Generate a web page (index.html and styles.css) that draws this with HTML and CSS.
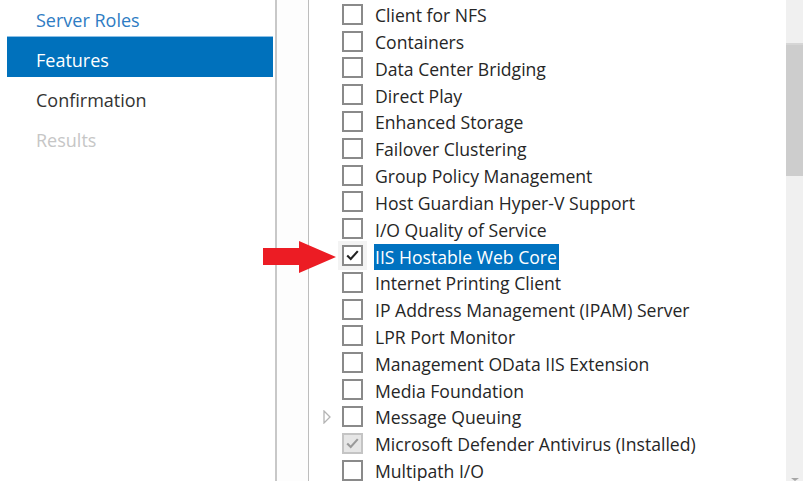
FILE: index.html
```html
<!DOCTYPE html>
<html>
<head>
<meta charset="utf-8">
<link rel="stylesheet" href="styles.css">
</head>
<body>
<div class="wizard">
  <nav class="nav">
    <div class="nav-item visited">Server Roles</div>
    <div class="nav-item active">Features</div>
    <div class="nav-item">Confirmation</div>
    <div class="nav-item disabled">Results</div>
  </nav>
  <div class="sep"></div>
  <div class="gutter"></div>
  <div class="sep thin"></div>
  <div class="pane">
    <div class="list">
      <div class="row"><span class="exp"></span><span class="box"></span><span class="label">Client for NFS</span></div>
      <div class="row"><span class="exp"></span><span class="box"></span><span class="label">Containers</span></div>
      <div class="row"><span class="exp"></span><span class="box"></span><span class="label">Data Center Bridging</span></div>
      <div class="row"><span class="exp"></span><span class="box"></span><span class="label">Direct Play</span></div>
      <div class="row"><span class="exp"></span><span class="box"></span><span class="label">Enhanced Storage</span></div>
      <div class="row"><span class="exp"></span><span class="box"></span><span class="label">Failover Clustering</span></div>
      <div class="row"><span class="exp"></span><span class="box"></span><span class="label">Group Policy Management</span></div>
      <div class="row"><span class="exp"></span><span class="box"></span><span class="label">Host Guardian Hyper-V Support</span></div>
      <div class="row"><span class="exp"></span><span class="box"></span><span class="label">I/O Quality of Service</span></div>
      <div class="row focused"><span class="exp"></span><span class="halo"><span class="box checked"><svg viewBox="0 0 17 17" class="tick"><polyline points="2.5,8.5 6.5,12.5 14.5,3.5"/></svg></span></span><span class="label selected">IIS Hostable Web Core</span></div>
      <div class="row"><span class="exp"></span><span class="box"></span><span class="label">Internet Printing Client</span></div>
      <div class="row"><span class="exp"></span><span class="box"></span><span class="label">IP Address Management (IPAM) Server</span></div>
      <div class="row"><span class="exp"></span><span class="box"></span><span class="label">LPR Port Monitor</span></div>
      <div class="row"><span class="exp"></span><span class="box"></span><span class="label">Management OData IIS Extension</span></div>
      <div class="row"><span class="exp"></span><span class="box"></span><span class="label">Media Foundation</span></div>
      <div class="row"><span class="exp"><svg viewBox="0 0 8 14" class="tri"><polygon points="1,1 7,7 1,13"/></svg></span><span class="box"></span><span class="label">Message Queuing</span></div>
      <div class="row"><span class="exp"></span><span class="box checked disabled"><svg viewBox="0 0 17 17" class="tick"><polyline points="2.5,8.5 6.5,12.5 14.5,3.5"/></svg></span><span class="label">Microsoft Defender Antivirus (Installed)</span></div>
      <div class="row"><span class="exp"></span><span class="box"></span><span class="label">Multipath I/O</span></div>
    </div>
    <div class="scrollbar">
      <div class="thumb"></div>
      <div class="arrow-down"></div>
    </div>
  </div>
</div>
<svg class="red-arrow" viewBox="0 0 73 34" width="73" height="34"><polygon points="0,8 36,8 36,1 73,17 36,33 36,25 0,25"/></svg>
</body>
</html>
```

FILE: styles.css
```css
html, body {
  margin: 0;
  padding: 0;
}
body {
  width: 803px;
  height: 481px;
  overflow: hidden;
  background: #ffffff;
  font-family: "Open Sans", "Noto Sans", "DejaVu Sans", sans-serif;
  color: #262626;
  position: relative;
}
.wizard {
  display: flex;
  height: 481px;
}
.nav {
  width: 266px;
  padding: 0 2px 0 7px;
  margin-top: -4px;
  flex: none;
}
.nav-item {
  height: 40px;
  box-sizing: border-box;
  padding: 12px 0 0 29px;
  font-size: 18px;
  line-height: 24px;
  color: #333333;
}
.nav-item.visited { color: #2e7cc3; }
.nav-item.active {
  background: #0071bc;
  color: #ffffff;
  border-top: 1px solid #8cc0e6;
  height: 41px;
  margin-bottom: -1px;
  padding-top: 11px;
}
.nav-item.disabled { color: #c6c6c6; }
.sep {
  width: 2px;
  background: #c8c8c8;
  flex: none;
}
.sep.thin {
  width: 1px;
  background: #bdbdbd;
}
.gutter {
  width: 31px;
  background: #fdfdfd;
  flex: none;
}
.pane {
  flex: 1;
  display: flex;
}
.list {
  flex: 1;
  padding-top: 1.8px;
  display: flex;
  flex-direction: column;
}
.row {
  height: 26.82px;
  flex: none;
  display: flex;
  align-items: center;
  font-size: 17.6px;
  white-space: nowrap;
}
.exp {
  width: 33px;
  flex: none;
  display: flex;
  align-items: center;
  padding-left: 14px;
  box-sizing: border-box;
  height: 14px;
}
.tri {
  width: 8px;
  height: 14px;
  fill: none;
  stroke: #b4b4b4;
  stroke-width: 1.3;
}
.box {
  width: 21px;
  height: 21px;
  box-sizing: border-box;
  border: 2px solid #8a8a8a;
  background: #ffffff;
  flex: none;
  display: flex;
  align-items: center;
  justify-content: center;
  margin-top: -2px;
}
.halo {
  width: 21px;
  height: 21px;
  flex: none;
  display: flex;
  background: #f3f3f3;
  box-shadow: 0 0 0 4px #f3f3f3;
  margin-top: -2px;
}
.halo .box { margin-top: 0; }
.tick {
  width: 15px;
  height: 15px;
  fill: none;
  stroke: #222222;
  stroke-width: 2.4;
}
.box.disabled {
  background: #e6e6e6;
  border-color: #c4c4c4;
}
.box.disabled .tick { stroke: #9a9a9a; }
.label {
  margin-left: 11px;
  padding: 0 2px 0 1px;
  line-height: 26px;
  color: #262626;
}
.label.selected {
  background: #0072c0;
  color: #ffffff;
}
.scrollbar {
  width: 17px;
  flex: none;
  background: #f0f0f0;
  position: relative;
}
.thumb {
  margin-top: 43px;
  height: 133px;
  background: #cdcdcd;
  border-top: 2px solid #d6d6d6;
  box-sizing: border-box;
}
.arrow-down {
  position: absolute;
  left: 5px;
  bottom: 0;
  width: 0;
  height: 0;
  border-left: 4px solid transparent;
  border-right: 4px solid transparent;
  border-top: 3px solid #a6a6a6;
}
.red-arrow {
  position: absolute;
  left: 263px;
  top: 240px;
  fill: #ec1c24;
}
```
